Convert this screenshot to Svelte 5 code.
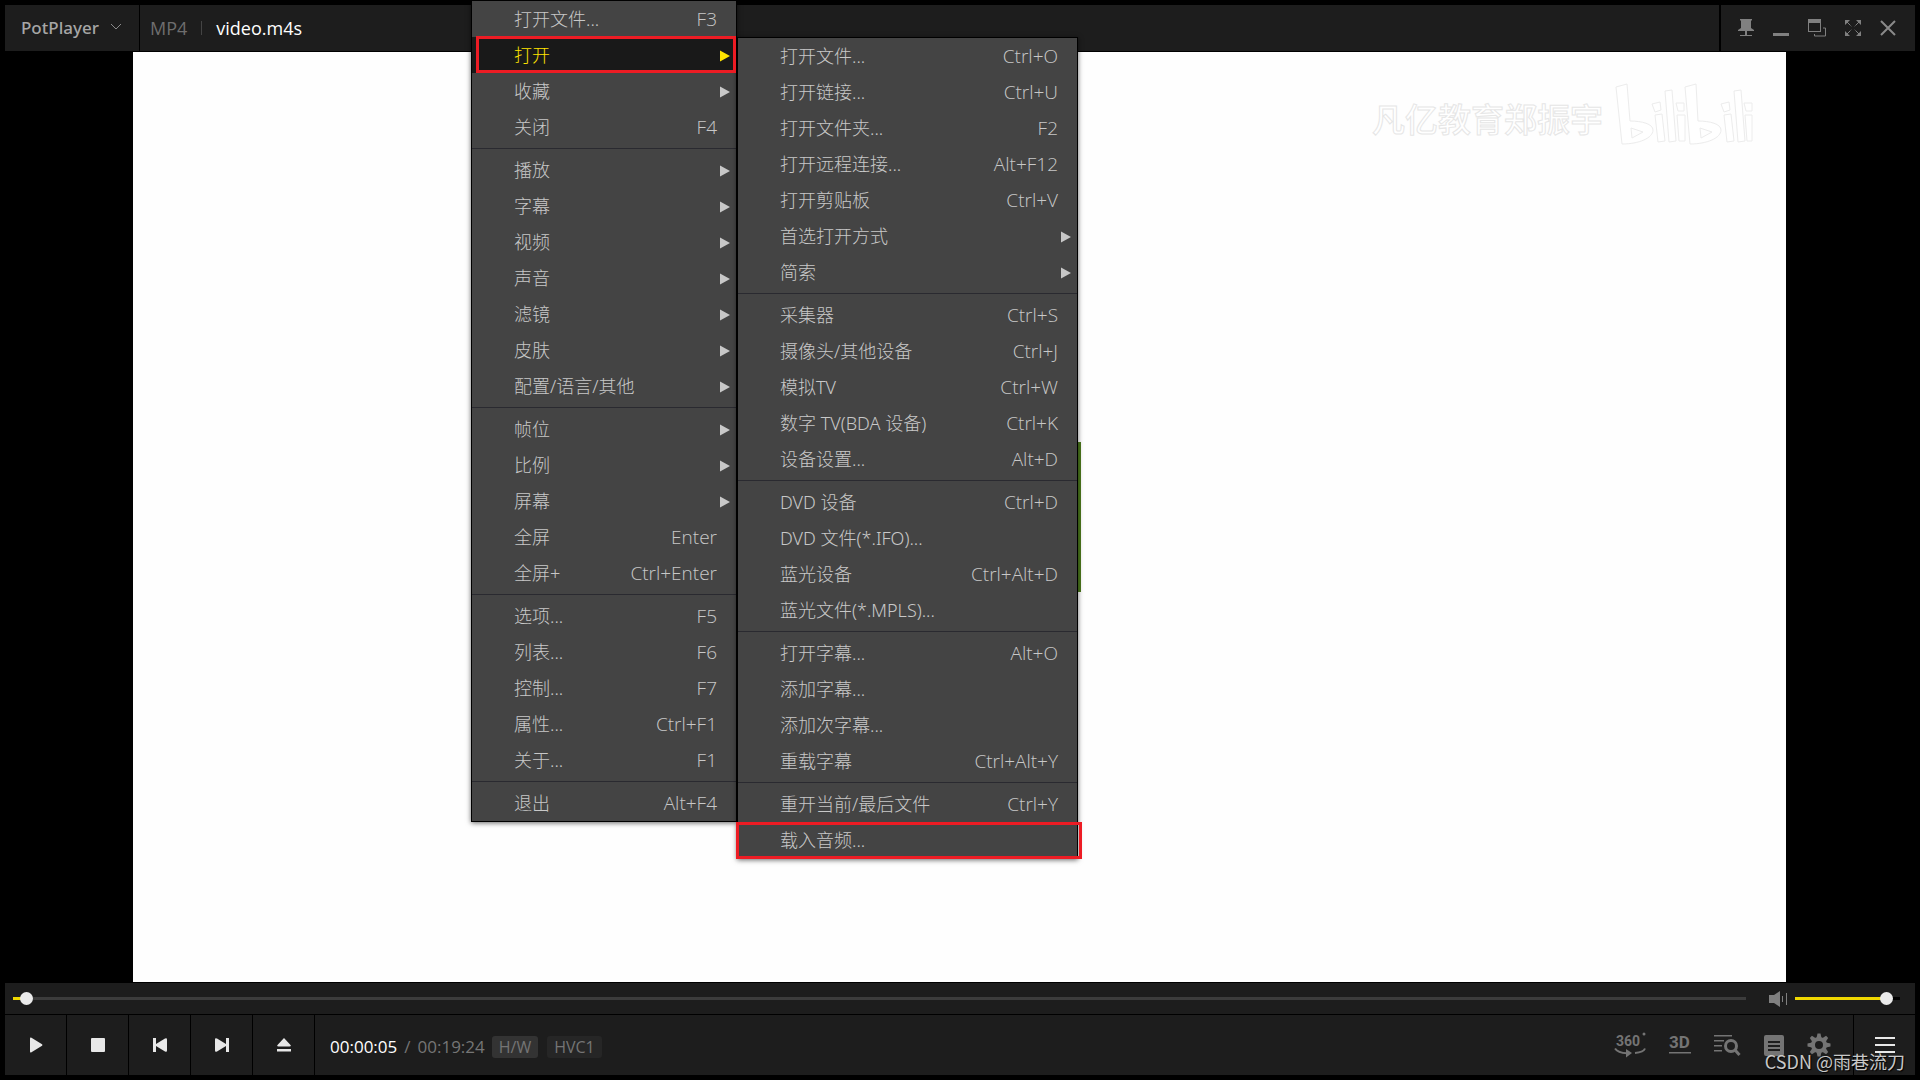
<script>
  const mainMenu = [
    [
      { label: "打开文件...", key: "F3" },
      { label: "打开", sub: true, active: true },
      { label: "收藏", sub: true },
      { label: "关闭", key: "F4" },
    ],
    [
      { label: "播放", sub: true },
      { label: "字幕", sub: true },
      { label: "视频", sub: true },
      { label: "声音", sub: true },
      { label: "滤镜", sub: true },
      { label: "皮肤", sub: true },
      { label: "配置/语言/其他", sub: true },
    ],
    [
      { label: "帧位", sub: true },
      { label: "比例", sub: true },
      { label: "屏幕", sub: true },
      { label: "全屏", key: "Enter" },
      { label: "全屏+", key: "Ctrl+Enter" },
    ],
    [
      { label: "选项...", key: "F5" },
      { label: "列表...", key: "F6" },
      { label: "控制...", key: "F7" },
      { label: "属性...", key: "Ctrl+F1" },
      { label: "关于...", key: "F1" },
    ],
    [{ label: "退出", key: "Alt+F4" }],
  ];

  const openMenu = [
    [
      { label: "打开文件...", key: "Ctrl+O" },
      { label: "打开链接...", key: "Ctrl+U" },
      { label: "打开文件夹...", key: "F2" },
      { label: "打开远程连接...", key: "Alt+F12" },
      { label: "打开剪贴板", key: "Ctrl+V" },
      { label: "首选打开方式", sub: true },
      { label: "简索", sub: true },
    ],
    [
      { label: "采集器", key: "Ctrl+S" },
      { label: "摄像头/其他设备", key: "Ctrl+J" },
      { label: "模拟TV", key: "Ctrl+W" },
      { label: "数字 TV(BDA 设备)", key: "Ctrl+K" },
      { label: "设备设置...", key: "Alt+D" },
    ],
    [
      { label: "DVD 设备", key: "Ctrl+D" },
      { label: "DVD 文件(*.IFO)..." },
      { label: "蓝光设备", key: "Ctrl+Alt+D" },
      { label: "蓝光文件(*.MPLS)..." },
    ],
    [
      { label: "打开字幕...", key: "Alt+O" },
      { label: "添加字幕..." },
      { label: "添加次字幕..." },
      { label: "重载字幕", key: "Ctrl+Alt+Y" },
    ],
    [
      { label: "重开当前/最后文件", key: "Ctrl+Y" },
      { label: "载入音频...", marked: true },
    ],
  ];

  let position = $state(5);
  let volume = $state(92);
</script>

{#snippet menu(groups, name)}
  <div class="menu {name}" role="menu">
    {#each groups as group}
      <div class="group" role="group">
        {#each group as item}
          <button class="item" class:active={item.active} class:marked={item.marked} role="menuitem">
            <span class="label">{item.label}</span>
            {#if item.key}<span class="key">{item.key}</span>{/if}
            {#if item.sub}
              <svg class="arrow" width="10" height="12" viewBox="0 0 10 12"><path d="M0 0.5 10 6 0 11.5z" fill="currentColor" /></svg>
            {/if}
          </button>
        {/each}
      </div>
    {/each}
  </div>
{/snippet}

<div class="player">
  <header class="titlebar">
    <button class="brand">
      <span>PotPlayer</span>
      <svg width="12" height="8" viewBox="0 0 12 8"><path d="M1 1l5 5 5-5" fill="none" stroke="#8a8a8a" /></svg>
    </button>
    <div class="file">
      <span class="format">MP4</span>
      <span class="bar"></span>
      <span class="name">video.m4s</span>
    </div>
    <div class="window-btns">
      <button aria-label="置顶">
        <svg width="16" height="20" viewBox="0 0 16 20" fill="#808080"><path d="M2 1h12v1l-1 1v7l3 2v1H0v-1l3-2V3L2 2zM7 13h2v4H7zM2 17h12v1H2z" /></svg>
      </button>
      <button aria-label="最小化">
        <svg width="16" height="20" viewBox="0 0 16 20"><path d="M0 15h16v3H0z" fill="#808080" /></svg>
      </button>
      <button aria-label="还原">
        <svg width="18" height="20" viewBox="0 0 18 20"><path d="M0 1h13v13H0zM1 5v8h11V5z" fill="#808080" fill-rule="evenodd" /><path d="M15 10h2.500v8h-11v-2" fill="none" stroke="#808080" /></svg>
      </button>
      <button aria-label="全屏">
        <svg width="16" height="20" viewBox="0 0 16 20"><path d="M0 2h5L0 7zM16 2h-5l5 5zM0 18h5l-5-5zM16 18h-5l5-5z" fill="#808080" /><path d="M2 4l4.500 4.500M14 4L9.500 8.500M2 16l4.500-4.500M14 16l-4.500-4.500" stroke="#808080" stroke-dasharray="5 1" /></svg>
      </button>
      <button aria-label="关闭">
        <svg width="16" height="20" viewBox="0 0 16 20"><path d="M1 3l14 14M15 3L1 17" stroke="#8a8a8a" stroke-width="2" /></svg>
      </button>
    </div>
  </header>

  <main class="stage">
    <div class="video">
      <div class="watermark">
        <span>凡亿教育郑振宇</span>
        <svg width="138" height="62" viewBox="0 0 138 62" fill="#fff" stroke="#ececec">
          <path d="M1 4l11-3 3 37c12 0 23 3 23 9 0 8-14 14-31 14zM16 45l1 10 11-6z" />
          <path d="M70 4l11-3 2 37c12 0 23 3 23 9 0 8-14 14-31 14zM85 45l1 10 11-6z" />
          <path d="M40 32l7-1 3 27-7 1zM50 8l7-1 4 51-7 1zM62 32h8v26h-6zM37 21l8-2 1 8-6 2zM61 20h8v8h-6z" />
          <path d="M109 32l7-1 3 27-7 1zM119 8l7-1 4 51-7 1zM130 32h7v26h-5zM106 21l8-2 1 8-6 2zM129 20h8v8h-6z" />
        </svg>
      </div>
      <div class="scene"></div>
    </div>
  </main>

  <div class="seekbar">
    <input class="seek" type="range" min="0" max="1164" step="1" bind:value={position} aria-label="进度" style="--fill: 8px" />
    <button class="mute" aria-label="静音">
      <svg width="20" height="16" viewBox="0 0 20 16" fill="#808080"><path d="M0 4h5l6-4v16l-6-4H0zM13 5h1v6h-1zM17 2h1v12h-1z" /></svg>
    </button>
    <input class="volume" type="range" min="0" max="100" bind:value={volume} aria-label="音量" style="--fill: {volume}%" />
  </div>

  <footer class="controls">
    <button class="ctl" aria-label="播放">
      <svg width="14" height="16" viewBox="0 0 14 16"><path d="M1 1.500Q1 0 2.500 .8L13 7.200q1 .8 0 1.600L2.500 15.200Q1 16 1 14.500z" /></svg>
    </button>
    <button class="ctl" aria-label="停止">
      <svg width="14" height="14" viewBox="0 0 14 14"><rect width="14" height="14" rx="1" /></svg>
    </button>
    <button class="ctl" aria-label="上一个">
      <svg width="14" height="14" viewBox="0 0 14 14"><path d="M0 0h3v6l9-5.500q2-1 2 1v11q0 2-2 1L3 8v6H0z" /></svg>
    </button>
    <button class="ctl" aria-label="下一个">
      <svg width="14" height="14" viewBox="0 0 14 14"><path d="M14 0h-3v6L2 .5Q0-.5 0 1.500v11q0 2 2 1L11 8v6h3z" /></svg>
    </button>
    <button class="ctl" aria-label="打开">
      <svg width="14" height="14" viewBox="0 0 14 14"><path d="M7 0l6.500 7q1 1.500-1 1.500h-11Q-.5 8.500.5 7zM0 11h14v2.500H0z" /></svg>
    </button>
    <div class="status">
      <span class="now">00:00:05</span>
      <span class="slash">/</span>
      <span class="total">00:19:24</span>
      <button class="badge hw">H/W</button>
      <button class="badge">HVC1</button>
    </div>
    <div class="tools">
      <button aria-label="360度视频">
        <svg width="32" height="26" viewBox="0 0 32 26">
          <text x="2" y="14" class="t360">360</text>
          <circle cx="30" cy="2" r="1.500" />
          <path d="M1 16.500c2 3 6 4.500 12 4.700M21 21c5-.5 9-2 10-4.500" fill="none" stroke="#747474" stroke-width="2" />
          <path d="M12 17l6 4-6 4.500z" />
        </svg>
      </button>
      <button aria-label="3D视频">
        <svg width="22" height="26" viewBox="0 0 22 26"><text x="0" y="16" class="t3d">3D</text><path d="M0 20h22v1.500H0z" /></svg>
      </button>
      <button aria-label="字幕搜索">
        <svg width="27" height="26" viewBox="0 0 27 26"><path d="M0 3h18v1.500H0zM0 8h10v1.500H0zM0 13h8v1.500H0zM0 18h8v1.500H0z" /><circle cx="17" cy="14" r="5.500" fill="none" stroke="#747474" stroke-width="3" /><path d="M21 18l4.500 5" stroke="#747474" stroke-width="3" /></svg>
      </button>
      <button aria-label="播放列表">
        <svg width="20" height="26" viewBox="0 0 20 26"><path fill-rule="evenodd" d="M2 3h16q2 0 2 2v17q0 2-2 2H2q-2 0-2-2V5q0-2 2-2zM4 9v2h12V9zM4 13v2h12v-2zM4 17v2h12v-2z" /></svg>
      </button>
      <button aria-label="设置">
        <svg width="24" height="26" viewBox="-12 -13 24 26">
          <circle r="6" fill="none" stroke="#747474" stroke-width="4" />
          {#each [0, 45, 90, 135, 180, 225, 270, 315] as a}
            <path d="M-2.500-7l1-4.500h3l1 4.500z" transform="rotate({a})" />
          {/each}
        </svg>
      </button>
    </div>
    <button class="ctl list" aria-label="菜单">
      <svg width="20" height="16" viewBox="0 0 20 16"><path d="M0 0h20v2H0zM0 7h20v2H0zM0 14h20v2H0z" /></svg>
    </button>
  </footer>

  <div class="menus">
    {@render menu(mainMenu, "main")}
    {@render menu(openMenu, "open")}
  </div>
  <div class="credit">CSDN @雨巷流刀</div>
</div>

<style>
  :global(body) {
    margin: 0;
    background: #000;
  }
  .player {
    position: relative;
    display: flex;
    flex-direction: column;
    box-sizing: border-box;
    min-height: 100vh;
    padding: 5px;
    background: #000;
    color: #c8c8c8;
    font-family: "Open Sans", "Noto Sans CJK SC", sans-serif;
    font-size: 18px;
    overflow: hidden;
  }
  button {
    padding: 0;
    border: 0;
    background: none;
    color: inherit;
    font: inherit;
  }
  svg {
    display: block;
  }
  .titlebar {
    display: flex;
    gap: 1px;
    height: 46px;
  }
  .brand {
    display: flex;
    align-items: center;
    gap: 11px;
    box-sizing: border-box;
    width: 134px;
    padding: 0 0 2px 16px;
    background: #1d1d1d;
    color: #a6a6a6;
    font-family: "Noto Sans", sans-serif;
    font-size: 17px;
    font-weight: 500;
  }
  .file {
    display: flex;
    flex: 1;
    align-items: center;
    padding-left: 10px;
    background: #1d1d1d;
  }
  .format {
    color: #6e6e6e;
  }
  .bar {
    width: 1px;
    height: 14px;
    margin: 0 14px;
    background: #444;
  }
  .name {
    color: #fff;
  }
  .window-btns {
    display: flex;
    align-items: center;
    gap: 19px;
    margin-left: 1px;
    padding: 0 19px 0 17px;
    background: #1d1d1d;
  }
  .stage {
    display: flex;
    flex: 1;
    justify-content: center;
    margin: 1px 0;
    padding-right: 1px;
  }
  .video {
    position: relative;
    width: 1653px;
    background: #fefefe;
  }
  .watermark {
    display: flex;
    align-items: center;
    justify-content: flex-end;
    gap: 12px;
    padding: 31px 33px 0 0;
    color: #fff;
    font-size: 33px;
    font-weight: 500;
    -webkit-text-stroke: 1px #e6e6e6;
  }
  .watermark span {
    padding-top: 8px;
  }
  .scene {
    position: absolute;
    top: 390px;
    left: 860px;
    width: 88px;
    height: 150px;
    background: #4d7a1d;
  }
  .seekbar {
    display: flex;
    align-items: center;
    height: 31px;
    padding: 0 15px 0 8px;
    background: #1d1d1d;
  }
  input[type="range"] {
    --track: #3c3c3c;
    height: 14px;
    margin: 0;
    background: linear-gradient(#f0d800, #f0d800) 0 50% / var(--fill) 3px no-repeat,
      linear-gradient(var(--track), var(--track)) 0 50% / 100% 3px no-repeat;
    -webkit-appearance: none;
    appearance: none;
  }
  input[type="range"]::-webkit-slider-thumb {
    width: 13px;
    height: 13px;
    border-radius: 50%;
    background: #ebebeb;
    -webkit-appearance: none;
  }
  .seek {
    flex: 1;
  }
  .mute {
    margin: 0 6px 0 23px;
  }
  input.volume {
    --track: #000;
    width: 105px;
  }
  .controls {
    display: flex;
    gap: 1px;
    height: 60px;
    margin-top: 1px;
  }
  .ctl {
    display: flex;
    align-items: center;
    justify-content: center;
    width: 61px;
    background: #1d1d1d;
    fill: #e8e8e8;
  }
  .status {
    display: flex;
    flex: 1;
    align-items: center;
    padding: 3px 0 0 15px;
    background: #1d1d1d;
    color: #757575;
    font-size: 17px;
  }
  .now {
    color: #fff;
  }
  .slash {
    margin: 0 7px;
  }
  .badge {
    height: 22px;
    margin-left: 7px;
    padding: 0 7px;
    border-radius: 3px;
    background: #262626;
    font-size: 16px;
    line-height: 22px;
  }
  .hw {
    background: #333;
  }
  .badge + .badge {
    margin-left: 9px;
  }
  .tools {
    display: flex;
    align-items: center;
    gap: 23px;
    margin-left: -1px;
    padding-right: 22px;
    background: #1d1d1d;
    fill: #747474;
  }
  .t360 {
    font: bold 14px "Roboto", sans-serif;
  }
  .t3d {
    font: bold 17px "Roboto", sans-serif;
  }
  .menus {
    position: absolute;
    top: 0;
    left: 471px;
    display: flex;
    align-items: flex-start;
  }
  .menu {
    border: 1px solid #000;
    background: #444;
    box-shadow: 0 1px 5px rgba(0, 0, 0, 0.6);
  }
  .main {
    width: 264px;
  }
  .open {
    width: 339px;
    margin-top: 37px;
  }
  .group + .group {
    margin-top: 3px;
    padding-top: 3px;
    border-top: 1px solid #2a2a30;
  }
  .item {
    position: relative;
    display: flex;
    align-items: center;
    box-sizing: border-box;
    width: 100%;
    height: 36px;
    padding: 0 19px 0 42px;
    font-family: "Noto Sans", "Noto Sans CJK SC", sans-serif;
    font-weight: 300;
    line-height: 36px;
  }
  .label {
    flex: 1;
    text-align: left;
    white-space: nowrap;
  }
  .key {
    font-family: "Open Sans", sans-serif;
    font-size: 19px;
  }
  .arrow {
    position: absolute;
    top: 13px;
    right: 6px;
  }
  .active {
    background: #191919;
    color: #ffe400;
  }
  /* red frames that call out the two rows to click */
  .active::after,
  .marked::after {
    content: "";
    position: absolute;
    inset: -1px 0 0 4px;
    border: 3px solid #ed1c24;
  }
  .marked::after {
    inset: 0 -5px -1px -2px;
  }
  .credit {
    position: absolute;
    right: 15px;
    bottom: 6px;
    color: #c8c8c8;
    font-family: "Noto Sans CJK SC", sans-serif;
    text-shadow: 1px 1px 1px #000;
  }
</style>
